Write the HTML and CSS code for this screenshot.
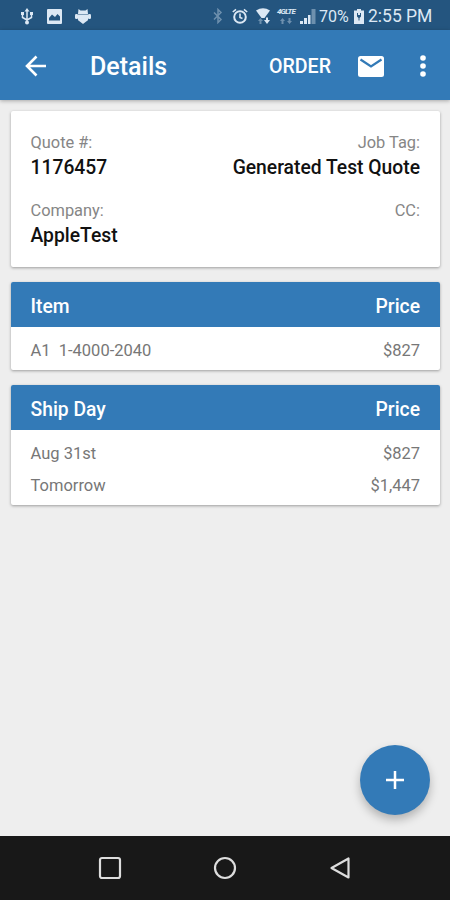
FILE: index.html
```html
<!DOCTYPE html>
<html lang="en">

<head>
    <meta charset="UTF-8">
    <meta name="viewport" content="width=device-width, initial-scale=1.0">
    <title>Details</title>
    <link rel="stylesheet" href="styles.css">
</head>

<body>
    <div class="status">
        <div class="status-left">
            <!-- usb -->
            <svg width="14" height="17" viewBox="0 0 14 17" fill="none" stroke="currentColor" stroke-width="1.500">
                <path d="M7 2v12M2.500 6v3.500L7 12M11.500 5v4.500L7 12" />
                <path d="M7 0l2.500 3.500h-5zM1 4h3v3H1zM10 4h3v3h-3z" fill="currentColor" stroke="none" />
                <circle cx="7" cy="14.500" r="2" fill="currentColor" stroke="none" />
            </svg>
            <!-- picture -->
            <svg width="15" height="15" viewBox="0 0 15 15">
                <path fill="currentColor" fill-rule="evenodd" d="M1 0h13a1 1 0 0 1 1 1v13a1 1 0 0 1-1 1H1a1 1 0 0 1-1-1V1a1 1 0 0 1 1-1zM2 11.500h11V7.500L10.500 5 8 8 5 5.500 2 9z" />
            </svg>
            <!-- android -->
            <svg width="16" height="15" viewBox="0 0 16 15" fill="currentColor">
                <path d="M3 5L3.500 0 5.500 1.500h5L12.500 0l.5 5zM2.800 5.500h10.400V10q0 1.500-2 2.500L8 15l-3.200-2.500q-2-1-2-2.500z" />
                <rect x="0" y="5" width="3" height="5" rx="1.300" />
                <rect x="13" y="5" width="3" height="5" rx="1.300" />
            </svg>
        </div>
        <div class="status-right">
            <svg class="bluetooth" width="10" height="16" viewBox="0 0 10 16" fill="none" stroke="currentColor" stroke-width="1.500">
                <path d="M1 4.500l7 7L5 14.500v-13l3 3-7 7" />
            </svg>
            <svg class="alarm" width="16" height="16" viewBox="0 0 16 16" fill="none" stroke="currentColor" stroke-width="2">
                <circle cx="8" cy="9" r="5.800" />
                <path d="M8 5.500V9.500l2.500 1M.8 4L4 1.300M15.200 4L12 1.300" stroke-width="1.600" />
            </svg>
            <svg class="wifi" width="14" height="16" viewBox="0 0 14 16" fill="currentColor">
                <path d="M0 2.500Q7-2 14 2.500L8.500 10h-3z" />
                <path d="M8 12h2V9.500h2V12h2l-3 4z" />
                <path d="M2 13h1.500v3h2v-3H7l-2.500-3z" opacity=".4" />
            </svg>
            <div class="lte">
                <span>4G</span><span>LTE</span>
                <svg width="12" height="6" viewBox="0 0 12 6" fill="currentColor">
                    <path d="M0 3l2.500-3L5 3H3.500v3h-2V3zM7 3h1.500V0h2v3H12L9.500 6z" />
                </svg>
            </div>
            <svg class="signal" width="16" height="15" viewBox="0 0 16 15" fill="currentColor">
                <path d="M0 12h3v3H0zM4 9h3v6H4zM8 6h2.500v9H8z" />
                <path d="M11.500 0H15.500v15h-4z" opacity=".4" />
            </svg>
            <span class="percent">70%</span>
            <svg class="battery" width="10" height="15" viewBox="0 0 10 15">
                <path fill="currentColor" fill-rule="evenodd" d="M3 0h4v1.500h3V15H0V1.500h3zM3 4v3.500L4.500 9v2.500h1V9L7 7.500V4H6v2H4V4z" />
            </svg>
            <span class="time">2:55 PM</span>
        </div>
    </div>

    <div class="toolbar">
        <svg class="back" width="22" height="22" viewBox="0 0 22 22" fill="none" stroke="currentColor" stroke-width="2.600">
            <path d="M21 11H2.500M11.500 1.500L2 11l9.500 9.500" />
        </svg>
        <div class="title">Details</div>
        <div class="order">ORDER</div>
        <svg class="mail" width="26" height="21" viewBox="0 0 26 21">
            <rect width="26" height="21" rx="2.500" fill="currentColor" />
            <path d="M2.500 3.500L13 10.500l10.500-7" fill="none" stroke="#337ab7" stroke-width="2.200" />
        </svg>
        <svg class="more" width="6" height="22" viewBox="0 0 6 22" fill="currentColor">
            <circle cx="3" cy="3" r="2.800" />
            <circle cx="3" cy="11" r="2.800" />
            <circle cx="3" cy="19" r="2.800" />
        </svg>
    </div>

    <div class="content">
        <div class="card info">
            <div class="info-row">
                <div class="field">
                    <div class="label">Quote #:</div>
                    <div class="value">1176457</div>
                </div>
                <div class="field right">
                    <div class="label">Job Tag:</div>
                    <div class="value">Generated Test Quote</div>
                </div>
            </div>
            <div class="info-row">
                <div class="field">
                    <div class="label">Company:</div>
                    <div class="value">AppleTest</div>
                </div>
                <div class="field right">
                    <div class="label">CC:</div>
                </div>
            </div>
        </div>

        <div class="card">
            <div class="head"><span>Item</span><span>Price</span></div>
            <div class="rows">
                <div class="row"><span>A1&nbsp; 1-4000-2040</span><span>$827</span></div>
            </div>
        </div>

        <div class="card">
            <div class="head"><span>Ship Day</span><span>Price</span></div>
            <div class="rows">
                <div class="row"><span>Aug 31st</span><span>$827</span></div>
                <div class="row"><span>Tomorrow</span><span>$1,447</span></div>
            </div>
        </div>

        <button class="fab" aria-label="Add">
            <svg width="20" height="20" viewBox="0 0 20 20" stroke="currentColor" stroke-width="2.500">
                <path d="M10 1v18M1 10h18" />
            </svg>
        </button>
    </div>

    <div class="navbar">
        <svg width="24" height="24" viewBox="0 0 24 24">
            <rect x="2" y="2" width="20" height="20" rx="2" />
        </svg>
        <svg width="24" height="24" viewBox="0 0 24 24">
            <circle cx="12" cy="12" r="10" />
        </svg>
        <svg width="24" height="24" viewBox="0 0 24 24">
            <path d="M20.500 2.500v19L3.500 12z" stroke-linejoin="round" />
        </svg>
    </div>
</body>

</html>
```
FILE: styles.css
```css
* {
    box-sizing: border-box;
}

body {
    margin: 0;
    height: 900px;
    display: flex;
    flex-direction: column;
    font-family: Roboto, Arial, sans-serif;
    background: #eeeeee;
    overflow: hidden;
}

svg {
    display: block;
    flex: none;
}

.status {
    height: 30px;
    flex: none;
    display: flex;
    justify-content: space-between;
    align-items: center;
    padding: 2px 18px 0 20px;
    background: #24557f;
    color: #dce8f4;
}

.status-left,
.status-right {
    display: flex;
    align-items: center;
}

.status-left {
    gap: 13px;
}

.bluetooth {
    opacity: 0.4;
    margin-right: 9px;
}

.alarm {
    margin-right: 8px;
}

.wifi {
    margin-right: 6px;
}

.lte {
    width: 20px;
    height: 16px;
    margin-right: 4px;
    display: flex;
    flex-wrap: wrap;
    justify-content: center;
    align-content: flex-start;
    font-size: 8px;
    line-height: 8px;
    font-weight: 700;
    font-style: italic;
    letter-spacing: -0.8px;
}

.lte svg {
    margin-top: 2px;
    opacity: 0.4;
}

.signal {
    margin-right: 3px;
}

.percent {
    font-size: 16px;
    width: 30px;
    margin-right: 5px;
}

.battery {
    margin-right: 4px;
}

.time {
    font-size: 17.5px;
    width: 64px;
    white-space: nowrap;
}

.toolbar {
    height: 70px;
    flex: none;
    display: flex;
    align-items: center;
    padding: 2px 24px 0 25px;
    background: #337ab7;
    color: #fff;
    box-shadow: 0 1px 4px rgba(0, 0, 0, 0.3);
    z-index: 1;
}

.title {
    flex: 1;
    margin-left: 43px;
    padding-top: 1px;
    font-size: 25px;
    font-weight: 500;
}

.order {
    font-size: 19.6px;
    font-weight: 500;
    margin-right: 27px;
}

.mail {
    margin-right: 36px;
}

.content {
    flex: 1;
    position: relative;
    display: flex;
    flex-direction: column;
    gap: 15px;
    padding: 11px 10px 0 11px;
}

.card {
    background: #fff;
    border-radius: 2px;
    overflow: hidden;
    box-shadow: 0 1px 3px rgba(0, 0, 0, 0.35);
}

.info {
    height: 156px;
    padding: 19px 20px 0 19.5px;
}

.info-row {
    display: flex;
    justify-content: space-between;
    height: 68px;
}

.right {
    text-align: right;
}

.label {
    font-size: 16.4px;
    line-height: 25px;
    color: #868686;
}

.value {
    font-size: 19.3px;
    line-height: 25px;
    font-weight: 500;
    color: #111;
}

.head {
    height: 45px;
    display: flex;
    justify-content: space-between;
    align-items: center;
    padding: 3px 20px 0 19.5px;
    background: #337ab7;
    color: #fff;
    font-size: 19.3px;
    font-weight: 500;
}

.rows {
    padding: 7px 20px 4px 19.5px;
}

.row {
    height: 32px;
    display: flex;
    justify-content: space-between;
    align-items: center;
    font-size: 16.5px;
    color: #777;
}

.fab {
    position: absolute;
    right: 20px;
    bottom: 21px;
    width: 70px;
    height: 70px;
    display: flex;
    align-items: center;
    justify-content: center;
    padding: 0;
    border: none;
    border-radius: 50%;
    background: #337ab7;
    color: #fff;
    box-shadow: 0 5px 10px rgba(0, 0, 0, 0.25);
}

.navbar {
    height: 64px;
    flex: none;
    display: flex;
    justify-content: center;
    align-items: center;
    gap: 91px;
    background: #181818;
}

.navbar svg {
    fill: none;
    stroke: #ddd;
    stroke-width: 2.2;
}
```
